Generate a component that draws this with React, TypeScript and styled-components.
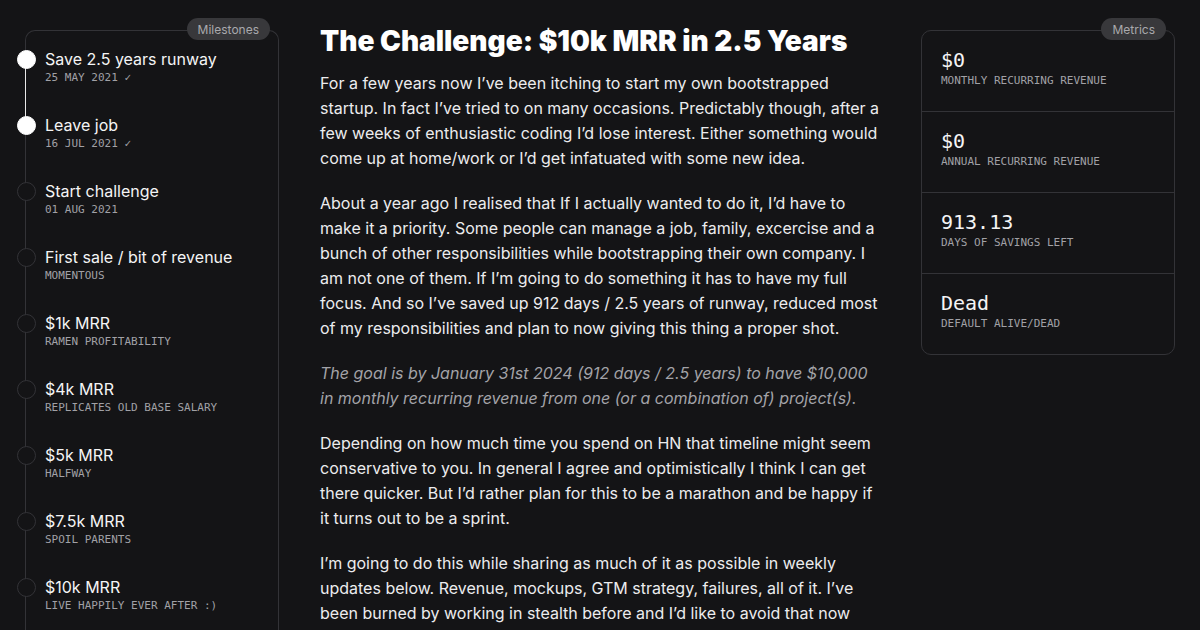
import styled, { createGlobalStyle } from "styled-components";

const GlobalStyle = createGlobalStyle`
  html, body {
    margin: 0;
    padding: 0;
    background: #141416;
    overflow: hidden;
  }
  * { box-sizing: border-box; }
`;

const mono = `"DejaVu Sans Mono", "Liberation Mono", monospace`;
const sans = `Inter, "Noto Sans", sans-serif`;

const Page = styled.div`
  display: grid;
  grid-template-columns: 254px 560px 254px;
  column-gap: 41px;
  padding: 0 25px;
  height: 630px;
  font-family: ${sans};
  color: #ececee;
`;

const Panel = styled.aside<{ $open?: boolean }>`
  position: relative;
  margin-top: 30px;
  border: 1px solid #333337;
  border-bottom: ${(p) => (p.$open ? "none" : "1px solid #333337")};
  border-radius: ${(p) => (p.$open ? "10px 10px 0 0" : "10px")};
  align-self: start;
  height: ${(p) => (p.$open ? "620px" : "auto")};
`;

const Badge = styled.span`
  position: absolute;
  top: -13px;
  right: 8px;
  height: 22px;
  padding: 0 11px;
  display: flex;
  align-items: center;
  border-radius: 11px;
  background: #38383b;
  color: #a9a9ad;
  font-size: 12px;
`;

const Milestones = styled.ol`
  list-style: none;
  margin: 0;
  padding: 18px 0 0 19px;
  display: flex;
  flex-direction: column;
  gap: 30px;
`;

const Milestone = styled.li<{ $done?: boolean; $link?: boolean }>`
  position: relative;

  &::before {
    content: "";
    position: absolute;
    left: -28px;
    top: 1px;
    width: 17px;
    height: 17px;
    border-radius: 50%;
    background: ${(p) => (p.$done ? "#ffffff" : "#141416")};
    border: 1px solid ${(p) => (p.$done ? "#ffffff" : "#333337")};
    z-index: 2;
  }

  &::after {
    content: "";
    display: ${(p) => (p.$link ? "block" : "none")};
    position: absolute;
    left: -20px;
    top: 10px;
    width: 1px;
    height: 66px;
    background: #e8e8e8;
    z-index: 1;
  }
`;

const MilestoneTitle = styled.div`
  font-size: 16px;
  line-height: 20px;
  color: #f4f4f5;
`;

const MilestoneNote = styled.div`
  margin-top: 1px;
  font-family: ${mono};
  font-size: 11px;
  line-height: 15px;
  color: #a1a1a6;
  text-transform: uppercase;
`;

const Article = styled.main`
  padding-top: 24px;
`;

const Title = styled.h1`
  margin: 0 0 13px;
  font-size: 28px;
  line-height: 34px;
  font-weight: 900;
  color: #ffffff;
`;

const Para = styled.p<{ $quote?: boolean }>`
  margin: 0 0 20px;
  font-size: 16px;
  line-height: 25px;
  color: ${(p) => (p.$quote ? "#a3a3a8" : "#ececee")};
  font-style: ${(p) => (p.$quote ? "italic" : "normal")};
`;

const Metric = styled.div`
  height: 81px;
  padding: 16px 19px 0;
  border-top: 1px solid #333337;

  &:first-of-type {
    border-top: none;
    height: 80px;
  }
`;

const MetricValue = styled.div`
  font-family: ${mono};
  font-size: 20px;
  line-height: 26px;
  color: #f4f4f5;
`;

const MetricLabel = styled.div`
  margin-top: 1px;
  font-family: ${mono};
  font-size: 11px;
  line-height: 14px;
  color: #a1a1a6;
`;

const milestones = [
  { title: "Save 2.5 years runway", note: "25 May 2021 ✓", done: true, link: true },
  { title: "Leave job", note: "16 Jul 2021 ✓", done: true },
  { title: "Start challenge", note: "01 Aug 2021" },
  { title: "First sale / bit of revenue", note: "Momentous" },
  { title: "$1k MRR", note: "Ramen profitability" },
  { title: "$4k MRR", note: "Replicates old base salary" },
  { title: "$5k MRR", note: "Halfway" },
  { title: "$7.5k MRR", note: "Spoil parents" },
  { title: "$10k MRR", note: "Live happily ever after :)" },
];

const metrics = [
  { value: "$0", label: "MONTHLY RECURRING REVENUE" },
  { value: "$0", label: "ANNUAL RECURRING REVENUE" },
  { value: "913.13", label: "DAYS OF SAVINGS LEFT" },
  { value: "Dead", label: "DEFAULT ALIVE/DEAD" },
];

export default function App() {
  return (
    <>
      <GlobalStyle />
      <Page>
        <Panel $open>
          <Badge>Milestones</Badge>
          <Milestones>
            {milestones.map((m) => (
              <Milestone key={m.title} $done={m.done} $link={m.link}>
                <MilestoneTitle>{m.title}</MilestoneTitle>
                <MilestoneNote>{m.note}</MilestoneNote>
              </Milestone>
            ))}
          </Milestones>
        </Panel>

        <Article>
          <Title>The Challenge: $10k MRR in 2.5 Years</Title>
          <Para>
            For a few years now I’ve been itching to start my own bootstrapped startup. In fact
            I’ve tried to on many occasions. Predictably though, after a few weeks of enthusiastic
            coding I’d lose interest. Either something would come up at home/work or I’d get
            infatuated with some new idea.
          </Para>
          <Para>
            About a year ago I realised that If I actually wanted to do it, I’d have to make it a
            priority. Some people can manage a job, family, excercise and a bunch of other
            responsibilities while bootstrapping their own company. I am not one of them. If I’m
            going to do something it has to have my full focus. And so I’ve saved up 912 days / 2.5
            years of runway, reduced most of my responsibilities and plan to now giving this thing a
            proper shot.
          </Para>
          <Para $quote>
            The goal is by January 31st 2024 (912 days / 2.5 years) to have $10,000 in monthly
            recurring revenue from one (or a combination of) project(s).
          </Para>
          <Para>
            Depending on how much time you spend on HN that timeline might seem conservative to
            you. In general I agree and optimistically I think I can get there quicker. But I’d
            rather plan for this to be a marathon and be happy if it turns out to be a sprint.
          </Para>
          <Para>
            I’m going to do this while sharing as much of it as possible in weekly updates below.
            Revenue, mockups, GTM strategy, failures, all of it. I’ve been burned by working in
            stealth before and I’d like to avoid that now and build in public.
          </Para>
        </Article>

        <Panel>
          <Badge>Metrics</Badge>
          {metrics.map((m) => (
            <Metric key={m.label}>
              <MetricValue>{m.value}</MetricValue>
              <MetricLabel>{m.label}</MetricLabel>
            </Metric>
          ))}
        </Panel>
      </Page>
    </>
  );
}
